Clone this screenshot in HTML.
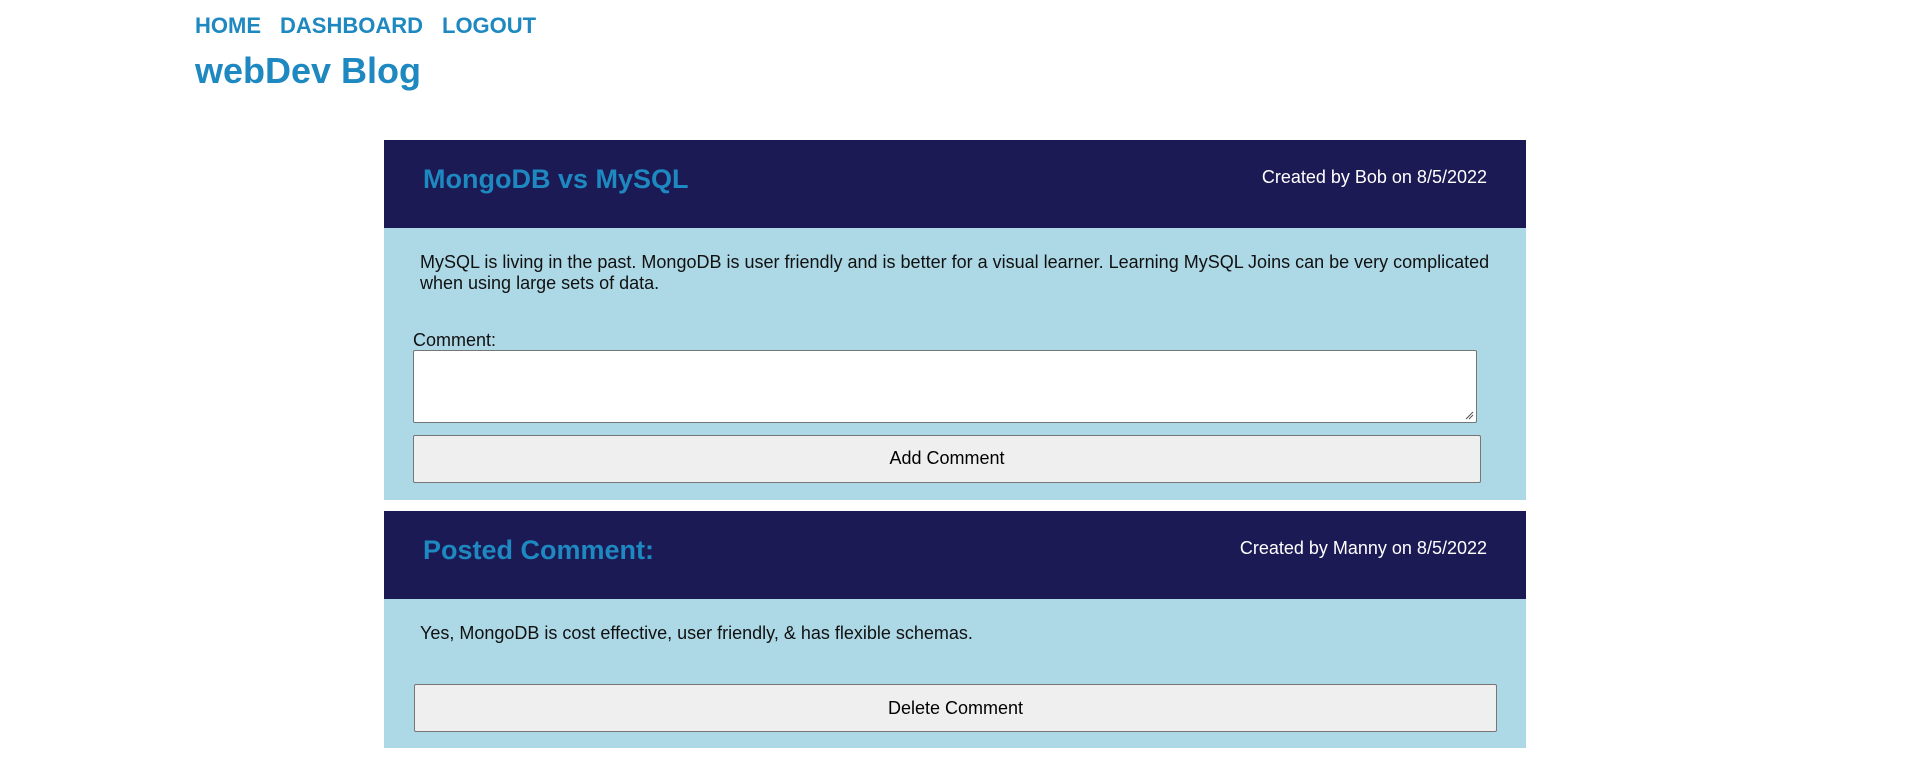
<!DOCTYPE html>
<html><head><meta charset="utf-8"><style>
body{margin:0;width:1906px;height:764px;background:#fff;font-family:"Liberation Sans",Arial,sans-serif;position:relative;overflow:hidden}
.a{position:absolute;white-space:nowrap}
.nav{top:13px;font-size:22px;font-weight:bold;color:#1e88c0}
.h1{left:195px;top:50px;font-size:36px;font-weight:bold;color:#1e88c0}
.hd{position:absolute;left:384px;width:1142px;height:88px;background:#1c1a55}
.bd{position:absolute;left:384px;width:1142px;background:#add8e6}
.t{font-size:27px;font-weight:bold;color:#1e88c0}
.c{font-size:18px;color:#fff}
.p{font-size:18px;color:#111;line-height:21px}
.btn{position:absolute;background:#efefef;border:1px solid #767676;border-radius:2px;box-sizing:border-box;font-size:18px;color:#000;text-align:center}
</style></head><body>
<div class="a nav" style="left:195px">HOME</div>
<div class="a nav" style="left:280px">DASHBOARD</div>
<div class="a nav" style="left:442px">LOGOUT</div>
<div class="a h1">webDev Blog</div>

<div class="hd" style="top:140px"></div>
<div class="a t" style="left:423px;top:164px">MongoDB vs MySQL</div>
<div class="a c" style="right:419px;top:167px">Created by Bob on 8/5/2022</div>
<div class="bd" style="top:228px;height:272px"></div>
<div class="a p" style="left:420px;top:252px">MySQL is living in the past. MongoDB is user friendly and is better for a visual learner. Learning MySQL Joins can be very complicated<br>when using large sets of data.</div>
<div class="a p" style="left:413px;top:330px">Comment:</div>
<div style="position:absolute;left:413px;top:350px;width:1064px;height:73px;box-sizing:border-box;background:#fff;border:1px solid #767676;border-radius:2px"></div>
<svg style="position:absolute;left:1464px;top:410px" width="10" height="10"><path d="M9 2L2 9M9 5L5 9" stroke="#555" stroke-width="1"/></svg>
<div class="btn" style="left:413px;top:435px;width:1068px;height:48px;line-height:45px">Add Comment</div>

<div class="hd" style="top:511px"></div>
<div class="a t" style="left:423px;top:535px">Posted Comment:</div>
<div class="a c" style="right:419px;top:538px">Created by Manny on 8/5/2022</div>
<div class="bd" style="top:599px;height:149px"></div>
<div class="a p" style="left:420px;top:623px">Yes, MongoDB is cost effective, user friendly, &amp; has flexible schemas.</div>
<div class="btn" style="left:414px;top:684px;width:1083px;height:48px;line-height:46px">Delete Comment</div>
</body></html>
